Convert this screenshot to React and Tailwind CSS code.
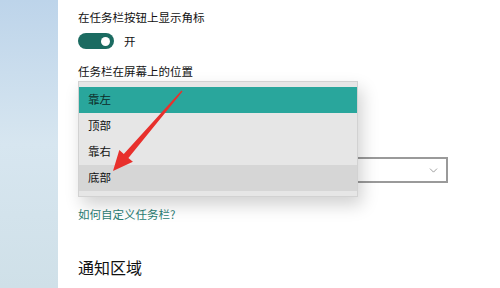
import { ChevronDown } from "lucide-react";

const options = ["靠左", "顶部", "靠右", "底部"];

export default function App() {
  return (
    <div className="relative flex w-[500px] h-[288px] overflow-hidden bg-white font-['Noto_Sans_CJK_SC',sans-serif] text-[#111]">
      {/* wallpaper strip */}
      <div className="w-[58px] shrink-0 bg-linear-to-b from-[#bdd4ea] via-[#d7e6f0] to-[#cfe0e8]" />

      {/* settings panel */}
      <div className="relative flex-1 flex flex-col items-start pl-5 pt-[9px]">
        <div className="text-[11.5px] leading-4">在任务栏按钮上显示角标</div>

        <div className="mt-2 flex items-center h-4 gap-[10px]">
          <div className="flex items-center justify-end w-[36px] h-4 rounded-full bg-[#1b6b61] pr-[4px]">
            <div className="w-[9px] h-[9px] rounded-full bg-white" />
          </div>
          <span className="text-[11.5px] leading-4">开</span>
        </div>

        <div className="mt-[14px] text-[11.5px] leading-4">任务栏在屏幕上的位置</div>

        {/* combobox underneath the popup */}
        <div className="mt-[78px] flex items-center justify-end w-[370px] h-[26px] border-2 border-[#9a9a9a] bg-white pr-[6px]">
          <ChevronDown className="w-[13px] h-[13px] text-[#777]" strokeWidth={1.3} />
        </div>

        <div className="mt-[23px] text-[11.5px] leading-4 text-[#2a7d73]">如何自定义任务栏?</div>

        <div className="mt-[33px] text-[16px] leading-6">通知区域</div>

        {/* open dropdown list */}
        <div className="absolute left-5 top-[81px] w-[280px] py-[5px] bg-[#e6e6e6] border border-[#d2d2d2] shadow-[4px_8px_16px_rgba(0,0,0,0.18)]">
          {options.map((opt, i) => (
            <div
              key={opt}
              className={
                i === 0
                  ? "flex items-center h-[26px] pl-[9px] text-[11.5px] bg-[#29a69c] text-[#0d2a27]"
                  : i === 3
                  ? "flex items-center h-[26px] pl-[9px] text-[11.5px] bg-[#d6d6d6]"
                  : "flex items-center h-[26px] pl-[9px] text-[11.5px]"
              }
            >
              {opt}
            </div>
          ))}
        </div>
      </div>

      {/* red annotation arrow */}
      <svg className="absolute inset-0 pointer-events-none" width="500" height="288" viewBox="0 0 500 288">
        <polygon
          points="181.5,90.5 123.8,153.9 119.3,150 113,171 132.9,161.8 128.4,157.9 182.5,91.5"
          fill="#e8302c"
        />
      </svg>
    </div>
  );
}
